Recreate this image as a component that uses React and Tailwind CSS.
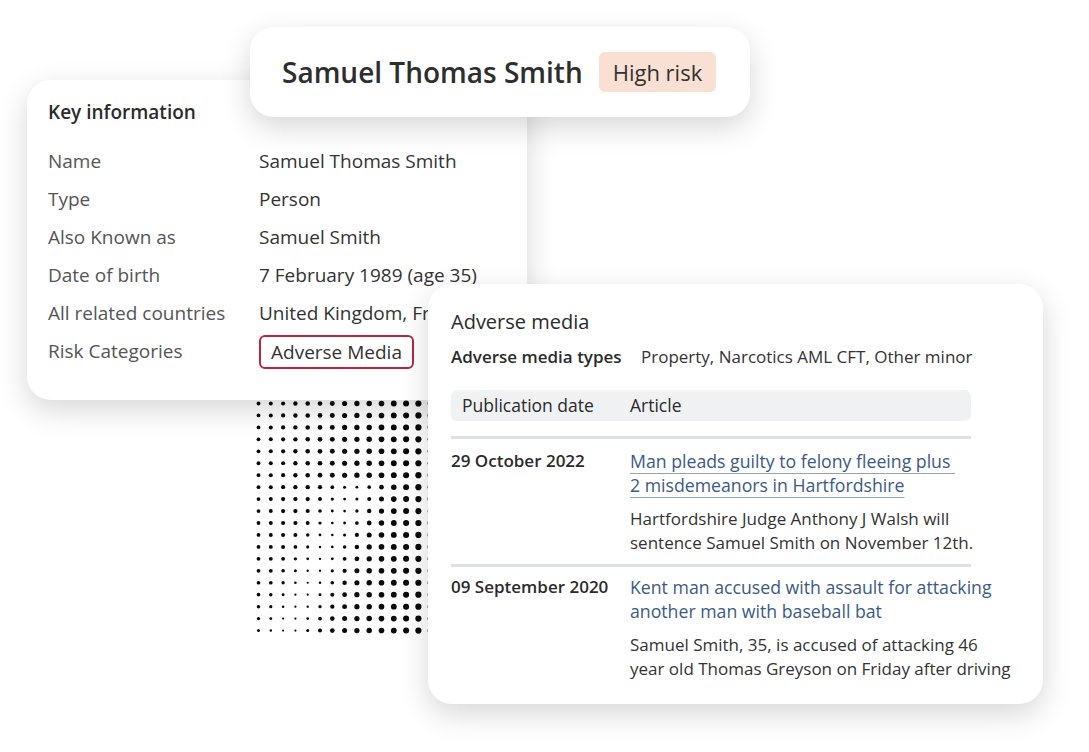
const rows = [
    ['Name', 'Samuel Thomas Smith'],
    ['Type', 'Person'],
    ['Also Known as', 'Samuel Smith'],
    ['Date of birth', '7 February 1989 (age 35)'],
    ['All related countries', 'United Kingdom, France'],
];

const articles = [
    {
        date: '29 October 2022',
        title: ['Man pleads guilty to felony fleeing plus ', '2 misdemeanors in Hartfordshire'],
        underline: true,
        text: ['Hartfordshire Judge Anthony J Walsh will', 'sentence Samuel Smith on November 12th.'],
    },
    {
        date: '09 September 2020',
        title: ['Kent man accused with assault for attacking', 'another man with baseball bat'],
        underline: false,
        text: ['Samuel Smith, 35, is accused of attacking 46', 'year old Thomas Greyson on Friday after driving'],
    },
];

function Halftone() {
    const dots = [];
    for (let r = 0; r < 20; r++) {
        for (let c = 0; c < 16; c++) {
            const u = c / 13;
            const band =
                r > 6 ? Math.exp(-Math.pow(c - (11 - r * 0.45), 2) / 5) * 0.6 : 0;
            let k = 0.4 + u * 0.6 - band;
            k = Math.max(0, Math.min(1, k));
            dots.push(
                <circle
                    key={`${r}-${c}`}
                    cx={3.5 + c * 12.3}
                    cy={3.5 + r * 11.95}
                    r={1.1 + k * 2.0}
                    fill="#0a0a0a"
                />,
            );
        }
    }
    return (
        <svg width="200" height="240" viewBox="0 0 200 240">
            {dots}
        </svg>
    );
}

export default function App() {
    return (
        <div
            className="relative h-[752px] w-[1089px] overflow-hidden bg-white text-[#333]"
            style={{ fontFamily: '"Open Sans", "Noto Sans", sans-serif' }}
        >
            <div className="absolute top-[400px] left-[255px]">
                <Halftone />
            </div>

            <section className="absolute top-[80px] left-[27px] h-[320px] w-[500px] overflow-hidden rounded-[24px] bg-white px-[21px] pt-[20px] shadow-[0_10px_30px_rgba(0,0,0,0.16)]">
                <div className="mb-[18px] text-[19px] leading-6 font-semibold text-[#2b2b2b]">
                    Key information
                </div>
                {rows.map(([label, value]) => (
                    <div key={label} className="flex h-[38px] items-center text-[19px] whitespace-nowrap">
                        <span className="w-[211px] shrink-0 text-[#555]">{label}</span>
                        <span className="text-[#333]">{value}</span>
                    </div>
                ))}
                <div className="flex h-[38px] items-center text-[19px]">
                    <span className="w-[211px] shrink-0 text-[#555]">Risk Categories</span>
                    <span className="mt-[2px] rounded-[6px] border-2 border-[#b8273f] px-[10px] leading-[30px] text-[#333]">
                        Adverse Media
                    </span>
                </div>
            </section>

            <header className="absolute top-[27px] left-[250px] flex h-[90px] w-[500px] items-center gap-[16px] rounded-[24px] bg-white pl-[32px] shadow-[0_10px_30px_rgba(0,0,0,0.16)]">
                <h1 className="text-[28px] font-semibold text-[#2e2e2e]">Samuel Thomas Smith</h1>
                <span className="rounded-[6px] bg-[#f9e0d2] px-[14px] text-[22px] leading-[40px] text-[#333]">
                    High risk
                </span>
            </header>

            <section className="absolute top-[284px] left-[428px] h-[420px] w-[615px] rounded-[24px] bg-white px-[23px] pt-[26px] shadow-[0_10px_30px_rgba(0,0,0,0.16)]">
                <h2 className="text-[20px] leading-6 text-[#2b2b2b]">Adverse media</h2>
                <div className="mt-[12px] flex text-[17px] leading-[22px] whitespace-nowrap">
                    <span className="w-[190px] font-semibold text-[#2b2b2b]">Adverse media types</span>
                    <span>Property, Narcotics AML CFT, Other minor</span>
                </div>
                <div className="mt-[22px] flex h-[31px] w-[520px] items-center rounded-[6px] bg-[#f0f1f3] pl-[11px] text-[17.5px] text-[#2b2b2b]">
                    <span className="w-[168px]">Publication date</span>
                    <span>Article</span>
                </div>
                <div className="mt-[15px] w-[520px] border-t-[3px] border-[#dde1e6] pt-[10px]">
                    <Article a={articles[0]} />
                </div>
                <div className="mt-[9px] w-[520px] border-t-[3px] border-[#dde1e6] pt-[8px]">
                    <Article a={articles[1]} />
                </div>
            </section>
        </div>
    );
}

function Article({ a }) {
    return (
        <div className="flex text-[17px] leading-6 whitespace-nowrap">
            <span className="w-[179px] shrink-0 font-semibold text-[#2b2b2b]">{a.date}</span>
            <div>
                <a
                    href="#"
                    className={`block text-[17.7px] text-[#3b5a85] ${a.underline ? 'underline decoration-[#8fa3bd] decoration-1 underline-offset-[5px]' : ''}`}
                >
                    {a.title.map((line) => (
                        <span key={line} className="block whitespace-pre">
                            {line}
                        </span>
                    ))}
                </a>
                <p className="mt-[10px] text-[#333]">
                    {a.text.map((line) => (
                        <span key={line} className="block">
                            {line}
                        </span>
                    ))}
                </p>
            </div>
        </div>
    );
}
